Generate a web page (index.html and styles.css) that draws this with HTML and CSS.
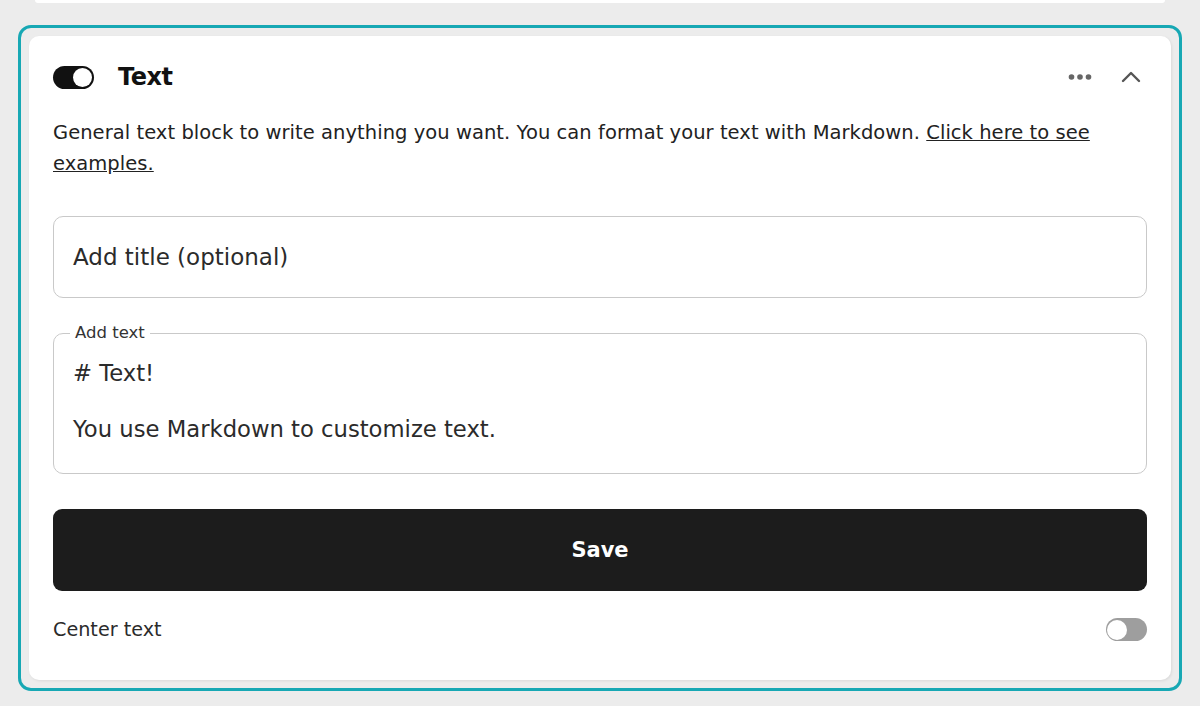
FILE: index.html
```html
<!DOCTYPE html>
<html lang="en">
<head>
  <meta charset="utf-8">
  <title>Text block</title>
  <link rel="stylesheet" href="styles.css">
</head>
<body>
  <div class="prev-card"></div>

  <div class="block-frame">
    <div class="block-card">
      <div class="block-header">
        <span class="switch switch-on"><span class="knob"></span></span>
        <h2 class="block-title">Text</h2>
        <div class="header-actions">
          <svg class="icon-dots" width="24" height="8" viewBox="0 0 24 8">
            <circle cx="3.5" cy="4" r="2.8" fill="#666"/>
            <circle cx="12" cy="4" r="2.8" fill="#666"/>
            <circle cx="20.5" cy="4" r="2.8" fill="#666"/>
          </svg>
          <svg class="icon-chevron" width="20" height="14" viewBox="0 0 20 14">
            <path d="M2 11 L10 3 L18 11" fill="none" stroke="#555" stroke-width="2.4" stroke-linecap="round" stroke-linejoin="round"/>
          </svg>
        </div>
      </div>

      <p class="block-desc">General text block to write anything you want. You can format your text with Markdown. <a href="#">Click here to see examples.</a></p>

      <div class="field">Add title (optional)</div>

      <fieldset class="field-area">
        <legend>Add text</legend>
        <div class="area-text"># Text!

You use Markdown to customize text.</div>
      </fieldset>

      <button class="save-btn">Save</button>

      <div class="option-row">
        <span class="option-label">Center text</span>
        <span class="switch switch-off"><span class="knob"></span></span>
      </div>
    </div>
  </div>
</body>
</html>
```

FILE: styles.css
```css
body {
  margin: 0;
  background: #ececec;
  font-family: "DejaVu Sans", "Open Sans", sans-serif;
  color: #222;
}

.prev-card {
  height: 3px;
  margin: 0 35px;
  background: #fff;
  border-radius: 0 0 6px 6px;
}

.block-frame {
  margin: 22px 0 0 18px;
  width: 1164px;
  box-sizing: border-box;
  border: 3px solid #17a8b4;
  border-radius: 13px;
  padding: 8px;
}

.block-card {
  background: #fff;
  border-radius: 10px;
  padding: 24px 24px 39px;
  box-shadow: 1px 1px 3px rgba(0, 0, 0, 0.08);
}

.block-header {
  display: flex;
  align-items: center;
  height: 34px;
}

.switch {
  position: relative;
  display: inline-block;
  border-radius: 12px;
}

.switch .knob {
  position: absolute;
  top: 2px;
  width: 19px;
  height: 19px;
  border-radius: 50%;
  background: #fff;
}

.switch-on {
  width: 41px;
  height: 23px;
  background: #111;
}

.switch-on .knob {
  right: 2px;
}

.switch-off {
  width: 41px;
  height: 23px;
  background: #9e9e9e;
}

.switch-off .knob {
  left: 1px;
  top: 1.5px;
  width: 20px;
  height: 20px;
}

.block-title {
  margin: 0 0 0 24px;
  font-size: 24px;
  font-weight: 700;
  letter-spacing: -0.5px;
  color: #111;
}

.header-actions {
  margin-left: auto;
  display: flex;
  align-items: center;
  gap: 29px;
  margin-right: 6px;
}

.block-desc {
  margin: 23px 0 37px;
  font-size: 19.5px;
  line-height: 31px;
  letter-spacing: 0.05px;
  color: #222;
}

.block-desc a {
  color: #222;
  text-decoration: underline;
}

.field {
  height: 82px;
  box-sizing: border-box;
  border: 1px solid #c9c9c9;
  border-radius: 10px;
  padding: 0 19px;
  display: flex;
  align-items: center;
  font-size: 23px;
  color: #2b2b2b;
}

.field-area {
  margin: 25px 0 35px;
  border: 1px solid #c9c9c9;
  border-radius: 10px;
  padding: 16px 19px 30px;
}

.field-area legend {
  margin-left: -3px;
  padding: 0 5px;
  font-size: 16.5px;
  line-height: 20px;
  color: #333;
}

.area-text {
  white-space: pre-line;
  font-size: 22.7px;
  line-height: 28px;
  color: #2b2b2b;
}

.save-btn {
  display: block;
  width: 100%;
  height: 82px;
  border: none;
  border-radius: 9px;
  background: #1c1c1c;
  color: #fff;
  font-family: inherit;
  font-size: 21px;
  font-weight: 700;
  cursor: pointer;
}

.option-row {
  display: flex;
  align-items: center;
  justify-content: space-between;
  margin-top: 27px;
}

.option-label {
  font-size: 19.2px;
  color: #2b2b2b;
}
```
